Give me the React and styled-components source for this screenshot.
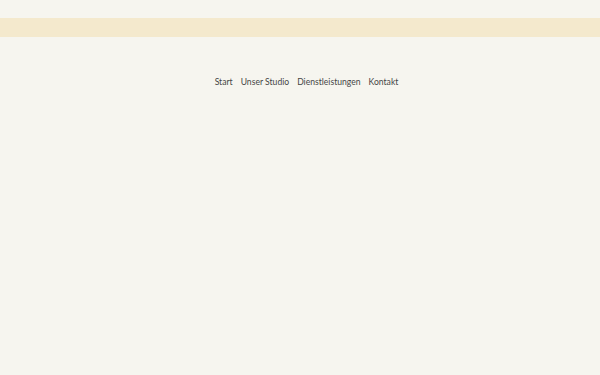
import React from 'react'
import styled, { createGlobalStyle } from 'styled-components'

const GlobalStyle = createGlobalStyle`
  html, body {
    margin: 0;
    padding: 0;
    background: #f6f5ef;
  }
  body {
    font-family: Lato, 'Noto Sans', sans-serif;
  }
`

const Page = styled.div`
  min-height: 375px;
  background: #f6f5ef;
  padding-top: 18px;
`

const Band = styled.div`
  height: 19px;
  background: #f4e9cd;
`

const Nav = styled.nav`
  display: flex;
  justify-content: center;
  gap: 8px;
  margin-top: 38px;
  padding-left: 13px;
`

const NavLink = styled.a`
  font-size: 8.6px;
  font-weight: 400;
  color: #454545;
  text-decoration: none;
  letter-spacing: 0;
  line-height: 15px;
`

const links = ['Start', 'Unser Studio', 'Dienstleistungen', 'Kontakt']

function App() {
  return (
    <>
      <GlobalStyle />
      <Page>
        <Band />
        <Nav>
          {links.map(l => (
            <NavLink key={l} href="#">
              {l}
            </NavLink>
          ))}
        </Nav>
      </Page>
    </>
  )
}

export default App
